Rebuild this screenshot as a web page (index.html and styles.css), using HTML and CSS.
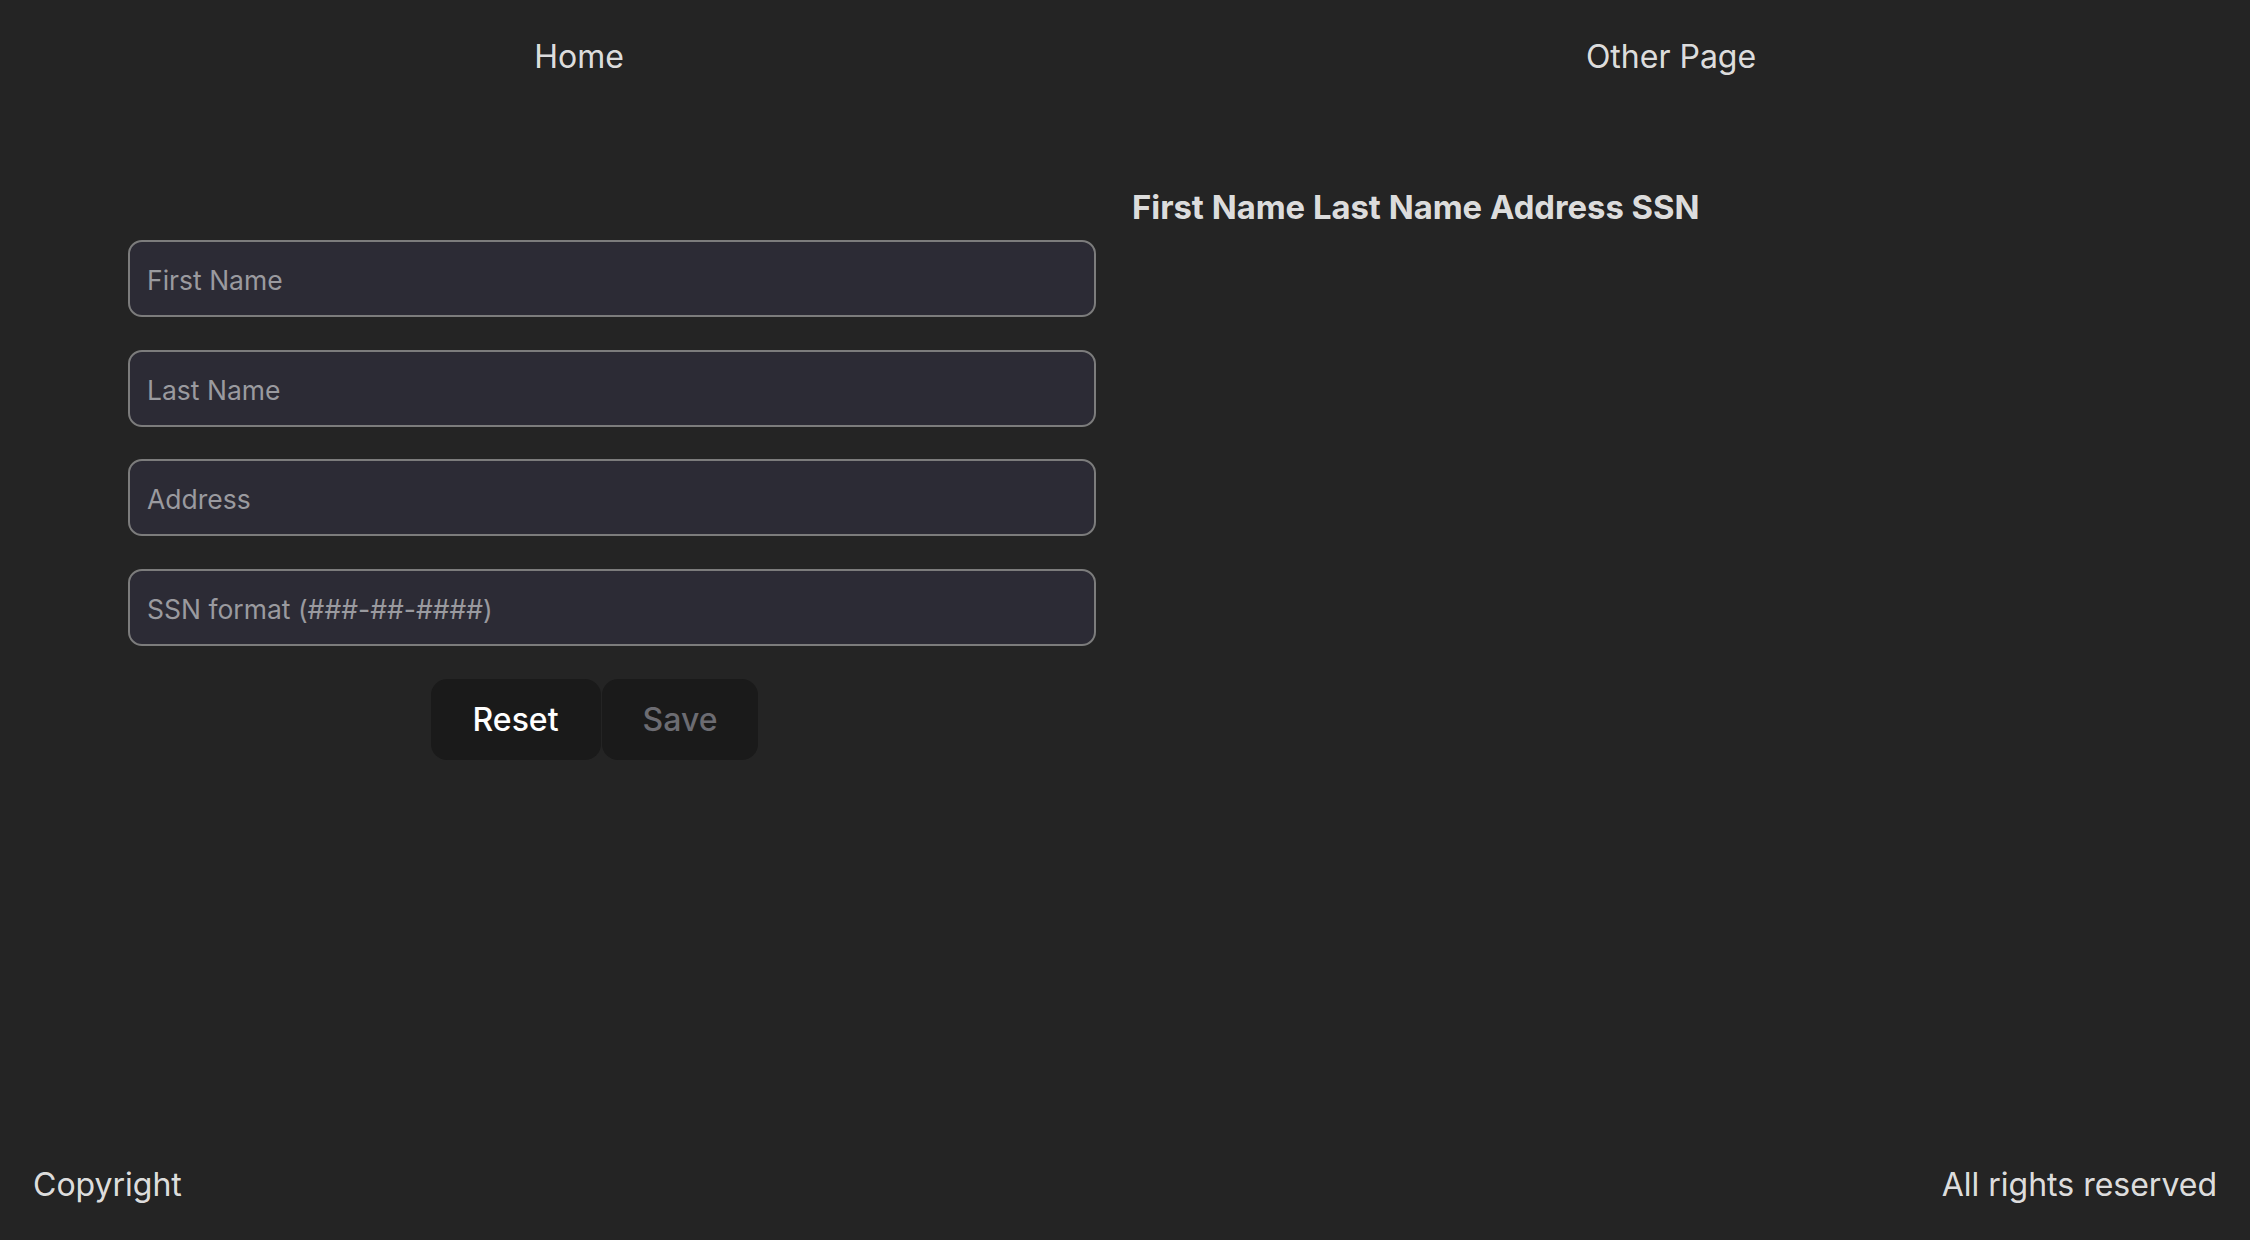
FILE: index.html
```html
<!DOCTYPE html>
<html lang="en">
<head>
<meta charset="utf-8">
<title>Form</title>
<link rel="stylesheet" href="styles.css">
</head>
<body>
<div class="app">
  <header class="nav">
    <a class="nav-link" href="#">Home</a>
    <a class="nav-link" href="#">Other Page</a>
  </header>
  <main class="main">
    <form class="form">
      <input class="field" type="text" placeholder="First Name">
      <input class="field" type="text" placeholder="Last Name">
      <input class="field" type="text" placeholder="Address">
      <input class="field" type="text" placeholder="SSN format (###-##-####)">
      <div class="actions">
        <button class="btn" type="button">Reset</button>
        <button class="btn btn-disabled" type="button" disabled>Save</button>
      </div>
    </form>
    <section class="list">
      <h2 class="list-head">First Name Last Name Address SSN</h2>
    </section>
  </main>
  <footer class="footer">
    <span>Copyright</span>
    <span>All rights reserved</span>
  </footer>
</div>
</body>
</html>
```
FILE: styles.css
```css
* { box-sizing: border-box; }
html, body {
  margin: 0;
  padding: 0;
  background: #242424;
}
body {
  font-family: Inter, "Noto Sans", "Liberation Sans", sans-serif;
  color: rgba(255, 255, 255, 0.87);
  font-size: 32px;
  line-height: 39px;
}
.app {
  height: 1240px;
  display: flex;
  flex-direction: column;
}
.nav {
  display: grid;
  grid-template-columns: 1fr 1fr;
  padding: 37px 33px 0;
  height: 112px;
}
.nav-link {
  text-align: center;
  color: rgba(255, 255, 255, 0.87);
  text-decoration: none;
}
.main {
  flex: 1;
  display: grid;
  grid-template-columns: 968px 1fr;
  column-gap: 36px;
  padding-left: 128px;
  align-items: start;
}
.form {
  display: flex;
  flex-direction: column;
  gap: 32.7px;
  padding-top: 128px;
}
.field {
  height: 77px;
  width: 100%;
  border: 2px solid #7c7c7c;
  border-radius: 14px;
  background: #2c2b35;
  color: rgba(255, 255, 255, 0.87);
  font-family: inherit;
  font-size: 26.5px;
  padding: 3px 17px 0;
  outline: none;
}
.field::placeholder {
  color: #9a9a9f;
}
.actions {
  display: flex;
  justify-content: center;
  gap: 1px;
  padding-right: 35px;
}
.btn {
  height: 81px;
  padding: 0 42px;
  border: none;
  border-radius: 16px;
  background: #1a1a1a;
  color: #ffffff;
  font-family: inherit;
  font-size: 32px;
  font-weight: 500;
}
.btn-disabled {
  color: #6c6c72;
  padding: 0 41px;
}
.list-head {
  margin: 76px 0 0;
  font-size: 32.8px;
  line-height: 39px;
  font-weight: 700;
  color: rgba(255, 255, 255, 0.87);
}
.footer {
  display: flex;
  justify-content: space-between;
  padding: 0 33px 36px;
}
```
